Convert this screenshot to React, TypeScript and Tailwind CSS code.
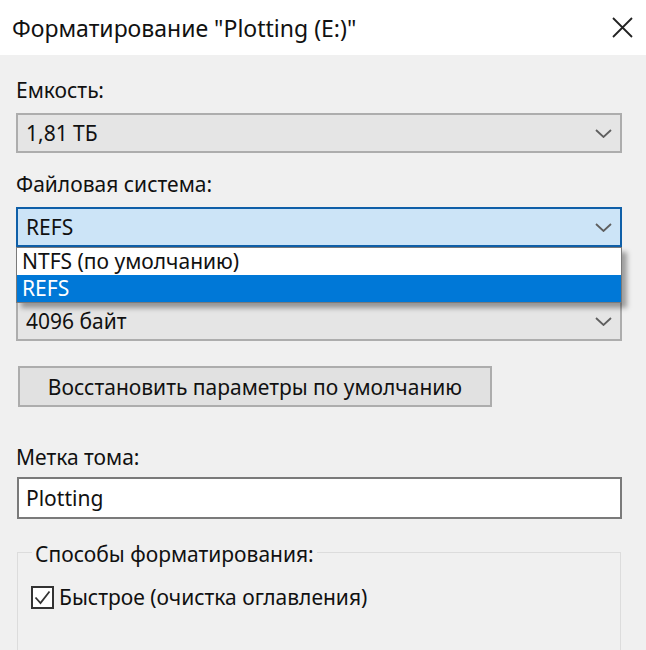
import React from "react";

const Chevron = () => (
  <svg width="17" height="9" viewBox="0 0 17 9" fill="none">
    <path d="M1 1l7.5 7 7.5-7" stroke="#5f5f5f" strokeWidth="1.8" />
  </svg>
);

const Combo = ({ value, focused }: { value: string; focused?: boolean }) => (
  <div
    className={`flex h-[40px] items-center justify-between border-2 pl-[8px] pr-[8px] ${
      focused ? "border-[#0f5fa8] bg-[#cce4f7]" : "border-[#adadad] bg-[#e5e5e5]"
    }`}
  >
    <span className="leading-[30px]">{value}</span>
    <Chevron />
  </div>
);

const Field = ({ label, children }: { label?: string; children: React.ReactNode }) => (
  <div>
    {/* label row; empty when it is covered by the open list */}
    <div className="h-[30px] leading-[30px]">{label}</div>
    <div className="relative mt-[8px]">{children}</div>
  </div>
);

export default function App() {
  return (
    <div className="h-[650px] w-[646px] overflow-hidden bg-[#f0f0f0] font-['Noto_Sans',sans-serif] text-[21px] text-[#111]">
      {/* title bar */}
      <div className="flex h-[55px] items-center justify-between bg-white pl-[12px] pr-[13px]">
        <span className="text-[23px] leading-[30px]">Форматирование "Plotting (E:)"</span>
        <svg width="21" height="21" viewBox="0 0 21 21">
          <path d="M1 1l19 19M20 1L1 20" stroke="#222" strokeWidth="1.8" />
        </svg>
      </div>

      <div className="pl-[16px] pr-[24px]">
        <div className="mt-[20px]">
          <Field label="Емкость:">
            <Combo value="1,81 ТБ" />
          </Field>
        </div>

        <div className="mt-[16px]">
          <Field label="Файловая система:">
            <Combo value="REFS" focused />
            {/* open list */}
            <div className="absolute left-0 right-0 top-full z-10 border border-[#7a7a7a] bg-white shadow-[5px_5px_5px_rgba(0,0,0,0.35)]">
              <div className="h-[27px] pl-[5px] leading-[27px]">NTFS (по умолчанию)</div>
              <div className="h-[27px] bg-[#0078d7] pl-[5px] leading-[27px] text-white">REFS</div>
            </div>
          </Field>
        </div>

        <div className="mt-[16px]">
          <Field>
            <Combo value="4096 байт" />
          </Field>
        </div>

        <button className="ml-[2px] mt-[25px] flex h-[41px] w-[474px] items-center justify-center border-2 border-[#adadad] bg-[#e1e1e1]">
          <span className="leading-[30px]">Восстановить параметры по умолчанию</span>
        </button>

        <div className="mt-[35px] leading-[30px]">Метка тома:</div>
        <div className="ml-[1px] mt-[5px] flex h-[42px] items-center border-2 border-[#7a7a7a] bg-white pl-[7px]">
          <span className="leading-[30px]">Plotting</span>
        </div>

        <fieldset className="ml-[1px] mr-[1px] mt-[16px] h-[140px] border border-[#dcdcdc] px-[14px]">
          <legend className="px-[3px] pt-[4px] leading-[30px]">Способы форматирования:</legend>
          <div className="-ml-[1px] mt-[13px] flex items-center gap-[5px]">
            <div className="flex h-[23px] w-[23px] items-center justify-center border-2 border-[#333] bg-white">
              <svg width="17" height="15" viewBox="0 0 17 15" fill="none">
                <path d="M1.5 7.5l5 5.5L15.5 1.5" stroke="#333" strokeWidth="1.8" />
              </svg>
            </div>
            <span className="leading-[30px]">Быстрое (очистка оглавления)</span>
          </div>
        </fieldset>
      </div>
    </div>
  );
}
